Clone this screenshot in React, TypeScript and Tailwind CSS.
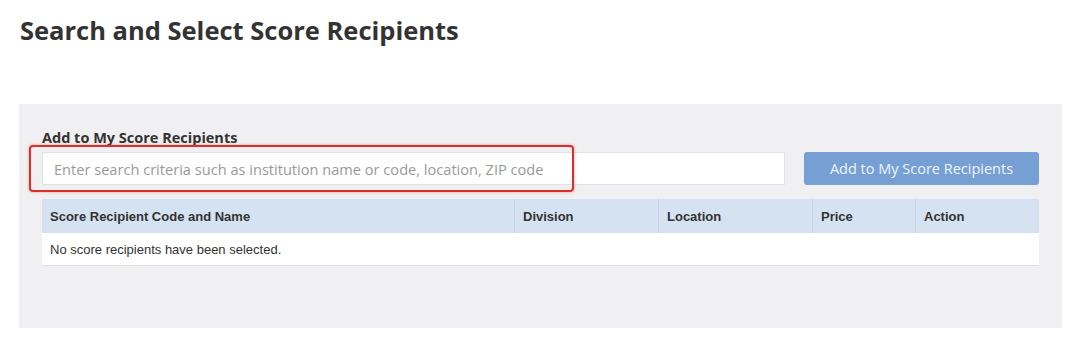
const columns = [
  { label: "Score Recipient Code and Name", width: "w-[472px]" },
  { label: "Division", width: "w-[144px]" },
  { label: "Location", width: "w-[154px]" },
  { label: "Price", width: "w-[103px]" },
  { label: "Action", width: "flex-1" },
];

export default function App() {
  return (
    <div className="h-[348px] w-[1080px] bg-white font-['Open_Sans',sans-serif] text-[#333]">
      <h1 className="pl-[20px] pt-[13px] text-[25.5px] font-bold leading-[34px] text-[#333]">
        Search and Select Score Recipients
      </h1>

      <div className="ml-[19px] mt-[57px] h-[224px] w-[1043px] bg-[#f0f0f2] px-[23px] pt-[24px]">
        <label className="block text-[14.5px] font-bold leading-[20px] text-[#333]">
          Add to My Score Recipients
        </label>

        <div className="relative mt-[4px] flex items-center gap-[19px]">
          <input
            type="text"
            placeholder="Enter search criteria such as institution name or code, location, ZIP code"
            className="h-[33px] w-[743px] border border-[#e2e2e4] bg-white px-[11px] text-[14.6px] text-[#333] outline-none placeholder:text-[#9a9a9a]"
          />
          <button
            type="button"
            className="h-[33px] flex-1 rounded-[3px] bg-[#76a0d4] text-[14.5px] text-[#eef3fa]"
          >
            Add to My Score Recipients
          </button>

          {/* highlight around search box */}
          <span className="pointer-events-none absolute left-[-13px] top-[-7px] h-[47px] w-[545px] rounded-[4px] border-2 border-[#d9302b] shadow-[0_0_3px_rgba(217,48,43,0.45)]" />
        </div>

        <div className="mt-[14px] font-['Liberation_Sans',Arial,sans-serif]">
          <div className="flex h-[34px] bg-[#d5e2f1]">
            {columns.map((col, i) => (
              <div
                key={col.label}
                className={`${col.width} flex items-center px-[8px] pt-[1px] text-[13px] font-bold text-[#333] ${
                  i > 0 ? "border-l border-[#c6d3e3]" : ""
                }`}
              >
                {col.label}
              </div>
            ))}
          </div>
          <div className="flex h-[33px] items-center border-b border-[#e0e0e2] bg-white px-[8px] pt-[2px] text-[13px] text-[#333]">
            No score recipients have been selected.
          </div>
        </div>
      </div>
    </div>
  );
}
